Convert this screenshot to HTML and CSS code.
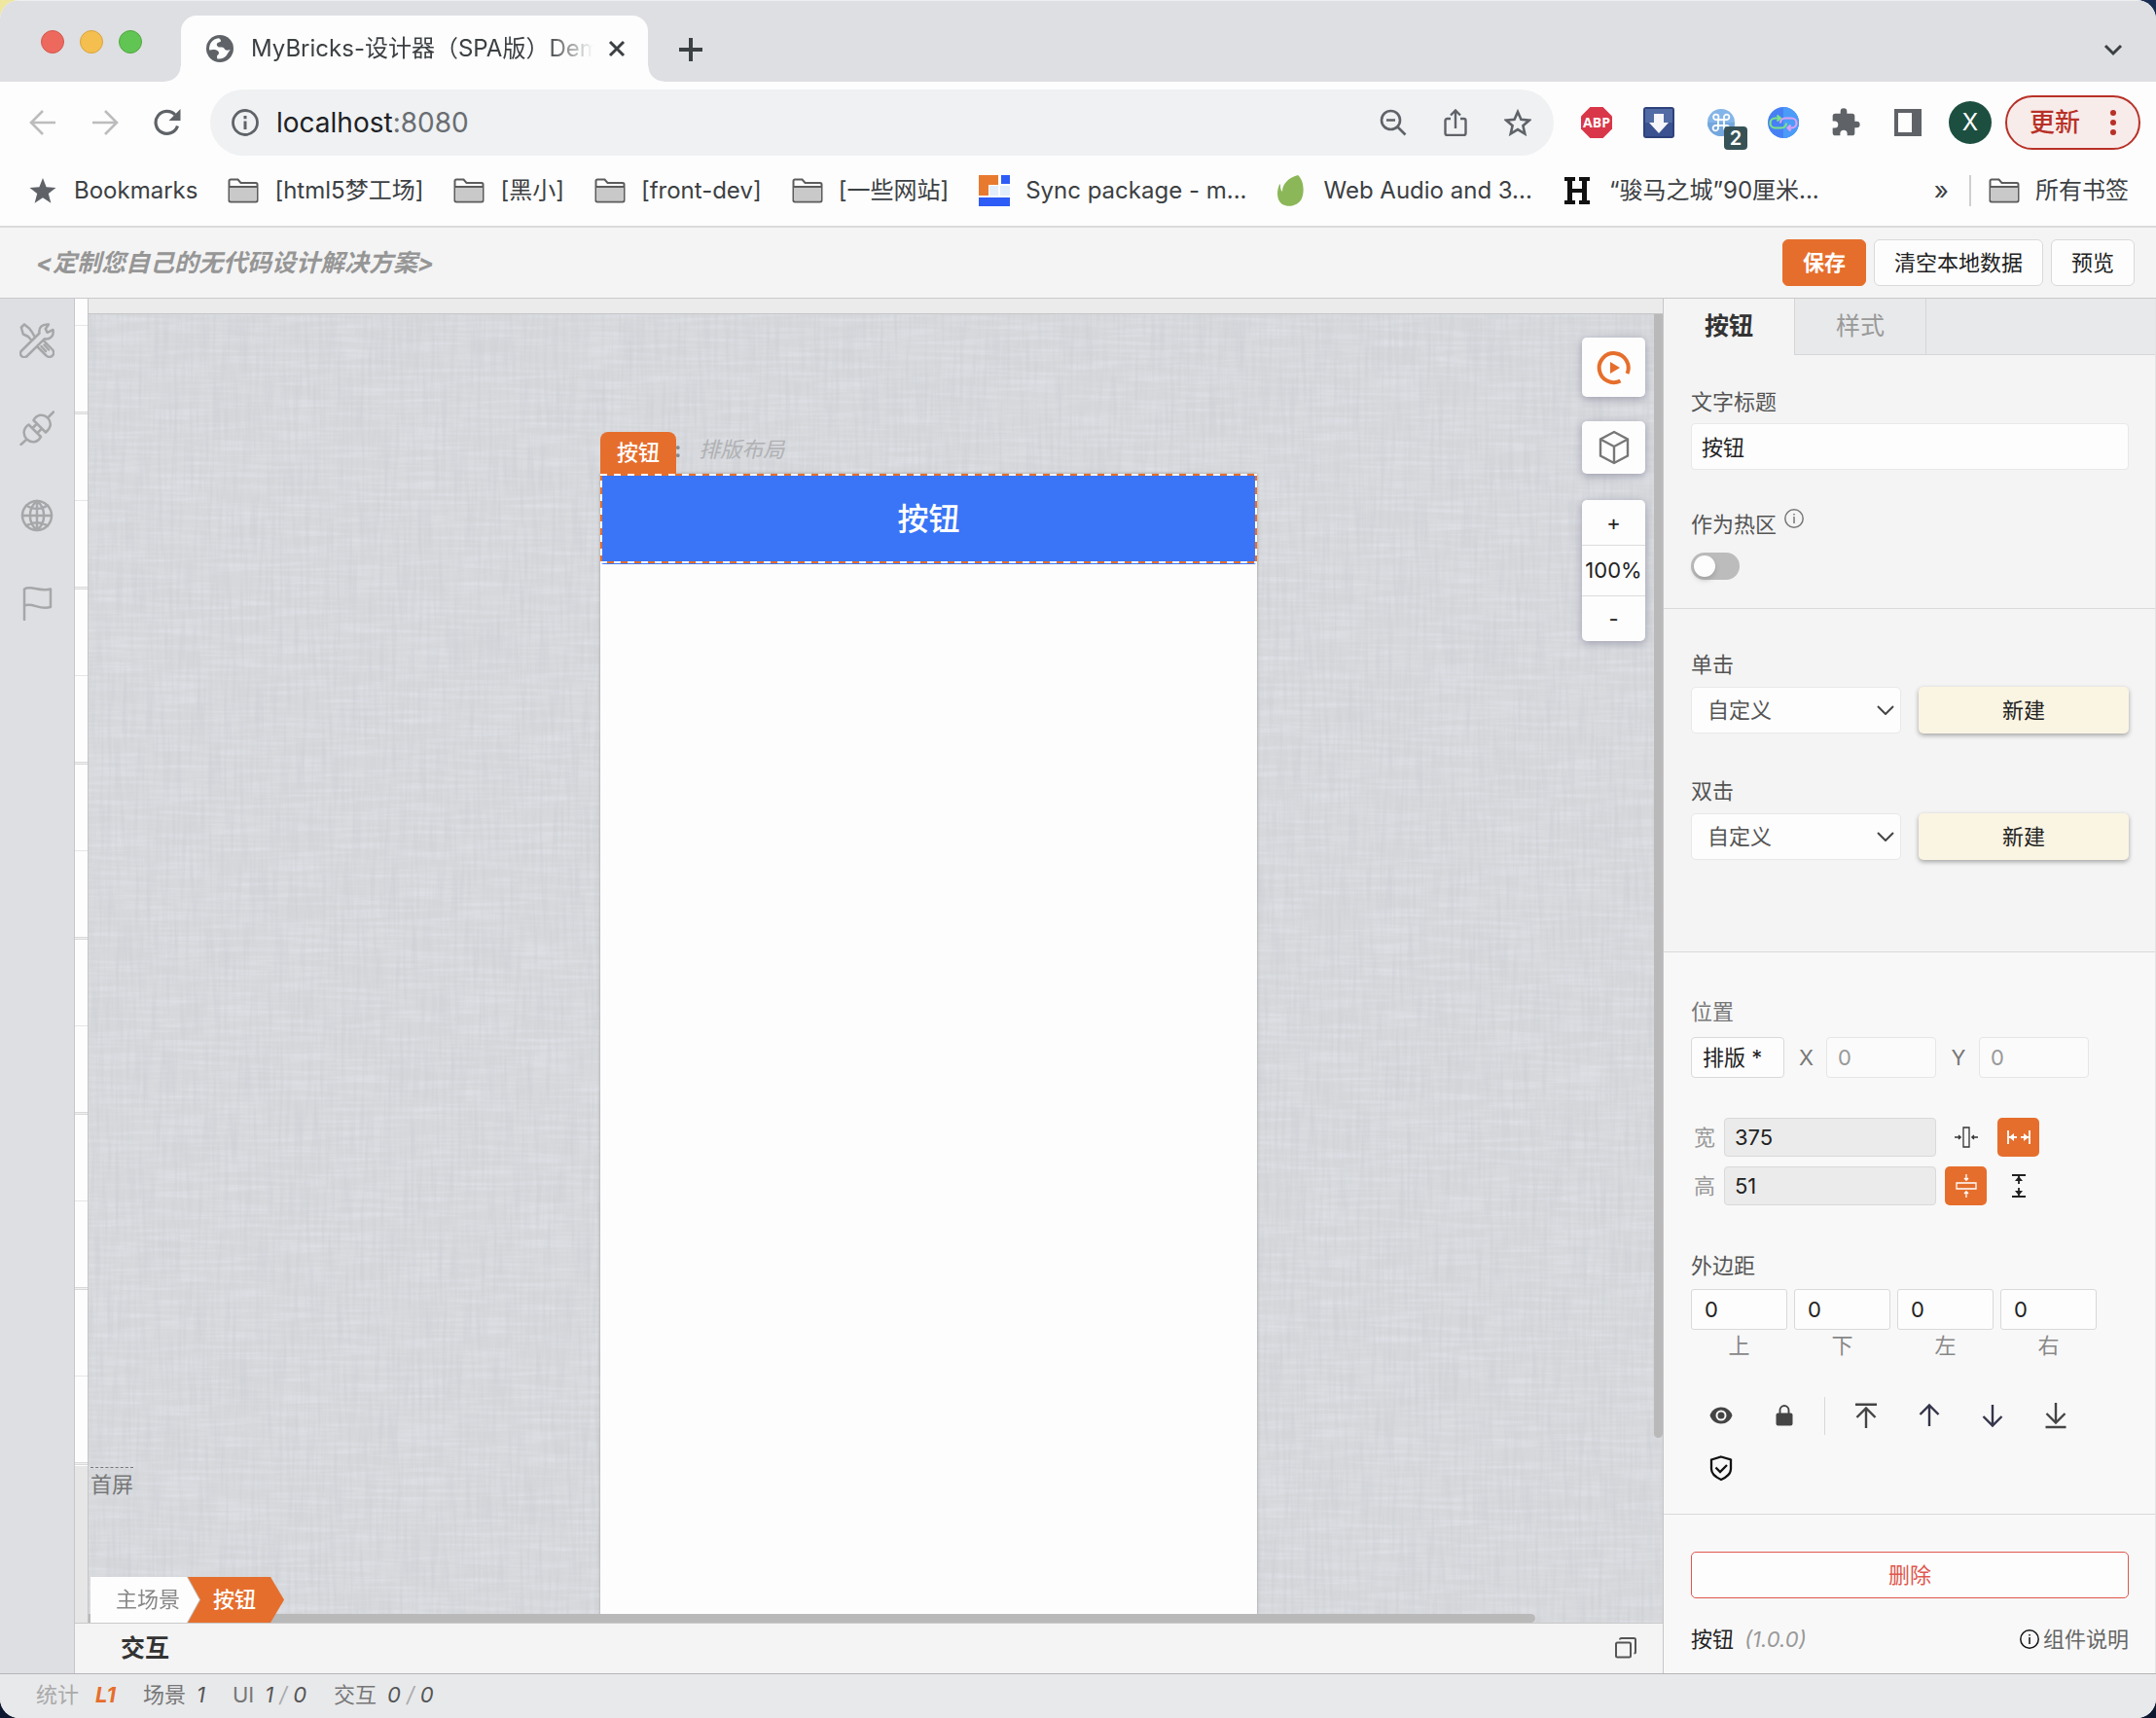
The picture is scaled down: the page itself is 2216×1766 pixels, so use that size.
FILE: index.html
```html
<!DOCTYPE html>
<html lang="zh-CN">
<head>
<meta charset="utf-8">
<title>MyBricks-设计器（SPA版）Demo</title>
<link rel="stylesheet" href="styles.css">
</head>
<body>
<svg class="defs" aria-hidden="true">
  <symbol id="folder" viewBox="0 0 32 26">
    <path d="M1.500 24V3a1.500 1.500 0 0 1 1.500-1.500h7.500L13.500 5H29a1.500 1.500 0 0 1 1.500 1.500V23a1.500 1.500 0 0 1-1.500 1.500H3A1.500 1.500 0 0 1 1.500 23z" fill="#fdfdfd" stroke="#5c5c5c" stroke-width="2"/>
    <path d="M2 9h28v14H2z" fill="#c9c9c9"/><path d="M2 9h28" stroke="#5c5c5c" stroke-width="2"/>
  </symbol>
</svg>
<div class="window">
  <header class="tabstrip">
    <div class="lights"><i class="light red"></i><i class="light yellow"></i><i class="light green"></i></div>
    <div class="tab">
      <svg class="i28" viewBox="0 0 24 24"><circle cx="12" cy="12" r="12" fill="#5f6368"/><path d="M11 2.800C5.500 3.300 2.200 8 2.700 13.200l3.300-.4c2 0 4.200.4 5 2.200.6 1.500-.6 2.400-1.500 3.200v2.600c3 .8 5.800-.3 8-2.300.9-1.500 1.800-3.500 3.700-5.700-2.200 1-4.700 1-5.200-.7-.5-1.400-2.500-1.300-4-1.300-2 0-3.600-2.100-2.200-3.700.9-1 2.700-.4 3.100-1.700.2-.9-.9-2.300-1.900-2.600z" fill="#fdfdfd"/></svg>
      <span class="tab-title">MyBricks-设计器（SPA版）Demo</span>
      <button class="plain" aria-label="关闭"><svg class="i20" viewBox="0 0 20 20"><path d="M3 3l14 14M17 3L3 17" stroke="#3c4043" stroke-width="3"/></svg></button>
    </div>
    <button class="plain newtab" aria-label="新标签页"><svg class="i24" viewBox="0 0 24 24"><path d="M12 0v24M0 12h24" stroke="#3c4043" stroke-width="4"/></svg></button>
    <button class="plain tabmenu" aria-label="搜索标签页"><svg class="i20" viewBox="0 0 20 20"><path d="M2 6l8 8 8-8" fill="none" stroke="#3c4043" stroke-width="3"/></svg></button>
  </header>

  <nav class="toolbar">
    <button class="plain cell" aria-label="后退"><svg class="i28" viewBox="0 0 28 28"><path d="M27 14H3M14 2L2 14l12 12" fill="none" stroke="#bcbcbe" stroke-width="2.600"/></svg></button>
    <button class="plain cell" aria-label="前进"><svg class="i28" viewBox="0 0 28 28"><path d="M1 14h24M14 2l12 12-12 12" fill="none" stroke="#bcbcbe" stroke-width="2.600"/></svg></button>
    <button class="plain cell" aria-label="刷新"><svg class="i28" viewBox="0 0 28 28"><path d="M24.500 17.500A11.500 11.500 0 1 1 22 6" fill="none" stroke="#5f6368" stroke-width="3.200"/><path d="M27.500 0v12h-12z" fill="#5f6368"/></svg></button>
    <div class="omnibox">
      <svg class="i28" viewBox="0 0 28 28"><circle cx="14" cy="14" r="12.500" fill="none" stroke="#5f6368" stroke-width="2.800"/><path d="M14 12.500V21M14 7v3.200" stroke="#5f6368" stroke-width="3"/></svg>
      <span class="url">localhost<span class="port">:8080</span></span>
      <button class="plain cell" aria-label="缩放"><svg class="i28" viewBox="0 0 28 28"><circle cx="11.500" cy="11.500" r="9.500" fill="none" stroke="#5f6368" stroke-width="2.600"/><path d="M18.500 18.500l8 8M7 11.500h9" stroke="#5f6368" stroke-width="2.600"/></svg></button>
      <button class="plain cell" aria-label="分享"><svg class="i28" viewBox="0 0 28 28"><path d="M9 10H5.500A2 2 0 0 0 3.500 12v13a2 2 0 0 0 2 2h17a2 2 0 0 0 2-2V12a2 2 0 0 0-2-2H19M14 20V2M9 6.500l5-5 5 5" fill="none" stroke="#5f6368" stroke-width="2.400"/></svg></button>
      <button class="plain cell" aria-label="收藏"><svg class="i28" viewBox="0 0 28 28"><path d="M14 3l3.400 7.800 8.400.8-6.400 5.600 1.900 8.300-7.300-4.400-7.300 4.400 1.900-8.300-6.400-5.600 8.400-.8z" fill="none" stroke="#5f6368" stroke-width="2.600"/></svg></button>
    </div>
    <button class="plain cell ext first" aria-label="Adblock Plus"><svg class="i32" viewBox="0 0 32 32"><path d="M9.400 0h13.200L32 9.400v13.200L22.600 32H9.400L0 22.600V9.400z" fill="#d93649"/><text x="16" y="21" text-anchor="middle" class="abp">ABP</text></svg></button>
    <button class="plain cell ext" aria-label="下载"><svg class="i32" viewBox="0 0 32 32"><rect width="32" height="32" rx="3" fill="#2d427c"/><rect x="2" y="2" width="28" height="14" fill="#526ba4"/><rect x="2" y="16" width="28" height="14" fill="#3b5290"/><path d="M11 7h10v9h5L16 27 6 16h5z" fill="#f6f6fa"/></svg></button>
    <button class="plain cell ext" aria-label="快捷指令"><svg class="i28" viewBox="0 0 28 28"><circle cx="14" cy="14" r="14" fill="#84b5e8"/><path d="M0 14a14 14 0 0 0 28 0z" fill="#74a7de"/><path d="M11 11h6v6h-6zM11 11H9a2.700 2.700 0 1 1 2.500-3zM17 11V8.500A2.700 2.700 0 1 1 19.500 11zM17 17h2.500a2.700 2.700 0 1 1-2.500 2.500zM11 17v2.500A2.700 2.700 0 1 1 8.500 17z" fill="none" stroke="#fff" stroke-width="1.800"/></svg><span class="badge">2</span></button>
    <button class="plain cell ext" aria-label="链接"><svg class="i32" viewBox="0 0 32 32"><circle cx="16" cy="16" r="16" fill="#4680f4"/><path d="M16 0a16 16 0 0 1 0 32z" fill="#4b9bf8"/><path d="M19 16.500a5 5 0 0 1-5 5H7.500a5 5 0 0 1 0-10H12M9.500 8.500l3.500 3-3.500 3" fill="none" stroke="#7be487" stroke-width="2.200"/><path d="M13 16.500a5 5 0 0 1 5-5h6.500a5 5 0 0 1 0 10H21M23.500 18.500L20.500 21.500l3 3" fill="none" stroke="#dba2f5" stroke-width="2.200"/></svg></button>
    <button class="plain cell ext" aria-label="扩展程序"><svg class="i32" viewBox="0 0 24 24"><path d="M20.500 11H19V7a2 2 0 0 0-2-2h-4V3.500a2.500 2.500 0 0 0-5 0V5H4a2 2 0 0 0-2 2v3.800h1.500a2.700 2.700 0 0 1 0 5.400H2V20c0 1.100.9 2 2 2h3.800v-1.500a2.700 2.700 0 0 1 5.400 0V22H17a2 2 0 0 0 2-2v-4h1.500a2.500 2.500 0 0 0 0-5z" fill="#5f6368"/></svg></button>
    <button class="plain cell ext" aria-label="侧边栏"><svg class="i28" viewBox="0 0 28 28"><path d="M0 0h28v28H0z" fill="#5f6368"/><path d="M4 4h14v20H4z" fill="#fdfdfd"/></svg></button>
    <button class="plain cell ext" aria-label="账号"><span class="avatar">X</span></button>
    <button class="update">更新<svg class="dots" viewBox="0 0 6 26"><circle cx="3" cy="3" r="3"/><circle cx="3" cy="13" r="3"/><circle cx="3" cy="23" r="3"/></svg></button>
  </nav>

  <nav class="bookmarks">
    <a href="#"><svg class="i32" viewBox="0 0 32 32"><path d="M16 3l3.600 9.300 9.900.6-7.700 6.200 2.600 9.700L16 23.300l-8.400 5.500 2.600-9.700L2.500 12.900l9.900-.6z" fill="#5f6368"/></svg>Bookmarks</a>
    <a href="#"><svg class="folder"><use href="#folder"/></svg>[html5梦工场]</a>
    <a href="#"><svg class="folder"><use href="#folder"/></svg>[黑小]</a>
    <a href="#"><svg class="folder"><use href="#folder"/></svg>[front-dev]</a>
    <a href="#"><svg class="folder"><use href="#folder"/></svg>[一些网站]</a>
    <a href="#"><svg class="i32" viewBox="0 0 32 32"><path d="M0 0h20v10H10v11H0z" fill="#e87a30"/><path d="M23 0h9v9h-9zM0 23h32v9H0z" fill="#2e5cf6"/><path d="M11 11h9v10h-9zM22 11h10v10H22z" fill="#e4edfb"/></svg>Sync package - m...</a>
    <a href="#"><svg class="i32" viewBox="0 0 32 32"><path d="M22 0c6 5 7 17 4 24-3 7-13 10-20 6-6-4-6-14-3-20l1-1c0 4 0 6 2 8C6 9 12 3 22 0z" fill="#8bb758"/></svg>Web Audio and 3...</a>
    <a href="#"><svg class="i32" viewBox="0 0 32 32"><path d="M2 2h11v4h-3v8h10V6h-3V2h11v4h-3v20h3v4H17v-4h3v-8H10v8h3v4H2v-4h3V6H2z" fill="#111"/></svg>“骏马之城”90厘米...</a>
    <button class="plain more" aria-label="更多书签">»</button>
    <a href="#" class="all"><svg class="folder"><use href="#folder"/></svg>所有书签</a>
  </nav>

  <header class="appbar">
    <strong class="slogan">&lt;定制您自己的无代码设计解决方案&gt;</strong>
    <button class="btn primary">保存</button>
    <button class="btn">清空本地数据</button>
    <button class="btn">预览</button>
  </header>

  <main class="workspace">
    <aside class="rail">
      <button class="plain" aria-label="工具"><svg class="i36" viewBox="0 0 36 36"><path d="M2.200 28.500L20.500 10.500C19.500 5 23 .8 30 1.500L26.800 6l1.700 3.800L34.500 7c1.200 6-3 10.500-8.800 9.300L7.800 34a3.900 3.900 0 0 1-5.600-5.500zM15.500 14L13 9.500 10 5.500 5 1.500 1.800 4.500l2 7L9 14l3.500 4M18 24l9.500 9.500a4 4 0 0 0 6.500-6L24.500 17.800M22.500 24l4.500 5M25.500 22.500l4.500 5"/></svg></button>
      <button class="plain" aria-label="连接器"><svg class="i36" viewBox="0 0 36 36"><path d="M9.500 14.500l12.500 12.500c-3.500 6-9.500 7-14.500 2.500-4.500-5-3.500-11.500 2-15zM7.500 29.500L1.500 35M14.500 10L27 22.500c5.500-4.500 6.500-10 2-15-5-4.500-11-3.500-14.500 2.500zM29 7.500L35 1.500M13.500 18l3.500-3.500M18.500 23l3.500-3.500"/></svg></button>
      <button class="plain" aria-label="国际化"><svg class="i36" viewBox="0 0 36 36"><circle cx="18" cy="18" r="15"/><path d="M18 3v30M3 18h30M7 7.500c6.500 4.500 15.500 4.500 22 0M7 28.500c6.500-4.500 15.500-4.500 22 0M18 3c-9.500 7.500-9.500 22.500 0 30M18 3c9.500 7.500 9.500 22.500 0 30"/></svg></button>
      <button class="plain" aria-label="标记"><svg class="i36" viewBox="0 0 36 36"><path d="M5 35V3.500c7-4.500 14 3 27 0v18.500c-12 3.500-18-5-27-1.500"/></svg></button>
    </aside>
    <div class="stage">
      <div class="ruler"></div>
      <section class="view">
        <div class="viewtop"></div>
        <div class="canvas">
          <svg class="linen" aria-hidden="true">
            <filter id="weft" x="0" y="0" width="100%" height="100%" color-interpolation-filters="sRGB"><feTurbulence type="fractalNoise" baseFrequency="0.016 0.250" numOctaves="2" seed="3"/><feColorMatrix values="0 0 0 0 .92 0 0 0 0 .93 0 0 0 0 .97 2 0 0 0 -.8"/></filter>
            <filter id="warp" x="0" y="0" width="100%" height="100%" color-interpolation-filters="sRGB"><feTurbulence type="fractalNoise" baseFrequency="0.250 0.016" numOctaves="2" seed="8"/><feColorMatrix values="0 0 0 0 .78 0 0 0 0 .79 0 0 0 0 .82 2 0 0 0 -.8"/></filter>
            <rect width="100%" height="100%" filter="url(#weft)" opacity=".4"/>
            <rect width="100%" height="100%" filter="url(#warp)" opacity=".45"/>
          </svg>
          <div class="device">
            <div class="layout-name"><b>:</b><em>排版布局</em></div>
            <span class="tag">按钮</span>
            <button class="demo">按钮</button>
          </div>
          <span class="fold">首屏</span>
          <div class="tools">
            <button class="tool play" aria-label="调试"><svg class="i36" viewBox="0 0 36 36"><path d="M24.500 31.500A15 15 0 1 1 31.500 24" fill="none" stroke="#e66e2c" stroke-width="4"/><path d="M14 12l10 6-10 6z" fill="#e66e2c"/></svg></button>
            <button class="tool" aria-label="组件库"><svg class="i36" viewBox="0 0 36 36"><path d="M18 2l14 7.500v17L18 34 4 26.500v-17zM4 9.500L18 17l14-7.500M18 17v17" fill="none" stroke="#777" stroke-width="2.400"/></svg></button>
            <div class="zoom"><button>+</button><button>100%</button><button>-</button></div>
          </div>
          <i class="vbar"></i><i class="hbar"></i>
          <nav class="crumbs"><span class="crumb-home"><a href="#">主场景</a></span><a href="#" class="crumb-now">按钮</a></nav>
        </div>
      </section>
      <footer class="logic"><strong>交互</strong><button class="plain" aria-label="展开"><svg class="i24" viewBox="0 0 24 24"><rect x="2" y="6.500" width="15" height="15" rx="1.500"/><path d="M6 3.500A1.500 1.500 0 0 1 7.500 2H20.500A1.500 1.500 0 0 1 22 3.500v12.500A1.500 1.500 0 0 1 20.500 17.500"/></svg></button></footer>
    </div>

    <aside class="panel">
      <div class="tabs"><button class="on">按钮</button><button>样式</button><span></span></div>
      <section class="group g1">
        <label for="ttl">文字标题</label>
        <input id="ttl" class="field white" value="按钮">
        <div class="hot"><label for="hot">作为热区</label><svg class="i20 info" viewBox="0 0 20 20"><circle cx="10" cy="10" r="9.200"/><path d="M10 8v7M10 5v1.600"/></svg></div>
        <input id="hot" type="checkbox" class="switch">
      </section>
      <section class="group g2">
        <label for="click">单击</label>
        <div class="pair"><select id="click"><option>自定义</option></select><button class="new">新建</button></div>
        <label for="dbl">双击</label>
        <div class="pair"><select id="dbl"><option>自定义</option></select><button class="new">新建</button></div>
      </section>
      <section class="group g3">
        <label class="light-label" for="pos">位置</label>
        <div class="position">
          <select id="pos" class="field compact"><option>排版 *</option></select>
          <label for="px">X</label><input id="px" class="field" value="0" disabled>
          <label for="py">Y</label><input id="py" class="field" value="0" disabled>
        </div>
        <div class="size">
          <label for="w">宽</label><input id="w" value="375">
          <button class="plain" aria-label="宽度适应内容"><svg class="i24" viewBox="0 0 24 24"><path d="M9 2h6v20H9zM0 12h6M4 10l2.200 2L4 14M24 12h-6M20 10l-2.200 2 2.200 2" fill="none" stroke="#333" stroke-width="1.300"/></svg></button>
          <button class="plain active" aria-label="宽度填充"><svg class="i24" viewBox="0 0 24 24"><path d="M1 5v14M23 5v14M2 12h8M22 12h-8" stroke="#fff" stroke-width="1.800"/><path d="M2 12l5-4v8zM22 12l-5-4v8z" fill="#fff"/></svg></button>
          <label for="h">高</label><input id="h" value="51">
          <button class="plain active" aria-label="高度适应内容"><svg class="i24" viewBox="0 0 24 24"><path d="M2 9h20v6H2zM12 0v6M10 4l2 2.200L14 4M12 24v-6M10 20l2-2.200 2 2.200" fill="none" stroke="#fff" stroke-width="1.300"/></svg></button>
          <button class="plain" aria-label="高度填充"><svg class="i24" viewBox="0 0 24 24"><path d="M5 1h14M5 23h14M12 2v8M12 22v-8" stroke="#222" stroke-width="1.800"/><path d="M12 2L8 7h8zM12 22l-4-5h8z" fill="#222"/></svg></button>
        </div>
        <span class="caption">外边距</span>
        <div class="margins">
          <label><input class="field" value="0">上</label><label><input class="field" value="0">下</label><label><input class="field" value="0">左</label><label><input class="field" value="0">右</label>
        </div>
        <div class="actions">
          <button class="plain" aria-label="显示"><svg class="i24" viewBox="0 0 24 24"><path d="M12 3.500C6 3.500 2 7.500 .5 12 2 16.500 6 20.500 12 20.500S22 16.500 23.500 12C22 7.500 18 3.500 12 3.500z" fill="#444"/><circle cx="12" cy="12" r="4.500" fill="#444" stroke="#f8f8f8" stroke-width="2"/></svg></button>
          <button class="plain" aria-label="锁定"><svg class="i24" viewBox="0 0 24 24"><rect x="3.500" y="9.500" width="17" height="13" rx="2" fill="#444"/><path d="M7.500 10V6.500a4.500 4.500 0 0 1 9 0V10" fill="none" stroke="#444" stroke-width="1.900"/></svg></button>
          <i></i>
          <button class="plain" aria-label="置顶"><svg class="i28" viewBox="0 0 28 28"><path d="M3 2.800h22M14 27V7M4.500 16L14 6.500l9.500 9.500" fill="none" stroke="#444" stroke-width="2.400"/></svg></button>
          <button class="plain" aria-label="上移"><svg class="i28" viewBox="0 0 28 28"><path d="M14 25V4M4.500 13L14 3.500l9.500 9.500" fill="none" stroke="#34344a" stroke-width="2.400"/></svg></button>
          <button class="plain" aria-label="下移"><svg class="i28" viewBox="0 0 28 28"><path d="M14 3v21M4.500 15l9.500 9.500 9.500-9.500" fill="none" stroke="#34344a" stroke-width="2.400"/></svg></button>
          <button class="plain" aria-label="置底"><svg class="i28" viewBox="0 0 28 28"><path d="M3.500 26h21M14 1v20M4.500 12l9.500 9.500 9.500-9.500" fill="none" stroke="#444" stroke-width="2.400"/></svg></button>
          <button class="plain" aria-label="权限"><svg class="i28" viewBox="0 0 28 28"><path d="M14 2.500l10 3v9.500c0 5-4.500 8.500-10 11-5.500-2.500-10-6-10-11V5.500zM8.500 13.500l4.500 4.500 7-7" fill="none" stroke="#111" stroke-width="2.300"/></svg></button>
        </div>
      </section>
      <section class="group g4">
        <button class="delete">删除</button>
        <div class="about"><span>按钮</span><em>(1.0.0)</em><a href="#"><svg class="i20" viewBox="0 0 20 20"><circle cx="10" cy="10" r="9.200"/><path d="M10 8v7M10 5v1.600"/></svg>组件说明</a></div>
      </section>
    </aside>
  </main>

  <footer class="status">
    <span class="dim">统计</span><em class="level">L1</em>
    <span>场景</span><em class="count">1</em>
    <span>UI</span><em class="count">1<i>/</i>0</em>
    <span>交互</span><em class="count">0<i>/</i>0</em>
  </footer>
</div>
<svg class="watermark" aria-hidden="true">
  <pattern id="mark" x="69" y="67" width="340" height="80" patternUnits="userSpaceOnUse">
    <g id="mk" transform="translate(80 0) rotate(45)"><text y="8">zhaoxing03 - 2023/10/19</text><text y="37">21:13:52</text></g>
    <use href="#mk" y="-80"/><use href="#mk" y="-160"/><use href="#mk" y="-240"/><use href="#mk" y="80"/>
  </pattern>
  <rect width="100%" height="100%" fill="url(#mark)"/>
</svg>
</body>
</html>
```
FILE: styles.css
```css
* { box-sizing: border-box; }
body {
  margin: 0;
  min-height: 100vh;
  display: flex;
  background: linear-gradient(90deg, #efe6a0 0 50%, #1b2c52 50%) 0 0 / 100% 60px no-repeat, #0d1830;
  color: #222;
  font: 22px/22px Inter, "Noto Sans CJK SC", sans-serif;
}
button, input, select { font: inherit; color: inherit; margin: 0; }
input, select { min-width: 0; }
a { color: inherit; text-decoration: none; }
svg { display: block; flex: none; }
.defs { position: absolute; width: 0; height: 0; }
.plain { display: flex; align-items: center; justify-content: center; padding: 0; border: 0; background: none; }
.i20 { width: 20px; height: 20px; }
.i24 { width: 24px; height: 24px; }
.i28 { width: 28px; height: 28px; }
.i32 { width: 32px; height: 32px; }
.i36 { width: 36px; height: 36px; }
.window { flex: 1; min-width: 0; display: flex; flex-direction: column; overflow: hidden; border-radius: 20px; background: #fdfdfd; }

/* browser chrome */
.tabstrip, .toolbar, .bookmarks { font-size: 24px; line-height: 32px; color: #3c4043; }
.tabstrip { display: flex; height: 84px; padding-right: 34px; background: #dedfe3; border-top: 1px solid #eeeff1; }
.lights { display: flex; gap: 16px; padding: 30px 40px 0 42px; }
.light { width: 24px; height: 24px; border-radius: 50%; border: 1px solid #d3584d; background: #ed695e; }
.light.yellow { background: #f4bf4f; border-color: #d8a33d; }
.light.green { background: #61c554; border-color: #51a73e; }
.tab { position: relative; display: flex; align-items: center; width: 480px; margin-top: 15px; padding: 0 22px 0 26px; border-radius: 16px 16px 0 0; background: #fdfdfd; }
.tab::before, .tab::after { content: ""; position: absolute; bottom: 0; left: -16px; width: 16px; height: 16px; background: radial-gradient(circle at 0 0, #dedfe3 15px, #fdfdfd 16px); }
.tab::after { left: 100%; background: radial-gradient(circle at 100% 0, #dedfe3 15px, #fdfdfd 16px); }
.tab-title { flex: 1; margin: 0 14px 0 18px; overflow: hidden; white-space: nowrap; mask-image: linear-gradient(90deg, #000 calc(100% - 48px), transparent); }
.newtab { margin-left: 32px; }
.newtab, .tabmenu { padding-top: 16px; }
.tabmenu { margin-left: auto; }
.toolbar { display: flex; align-items: center; height: 84px; padding: 0 16px 0 12px; }
.cell { position: relative; width: 64px; height: 64px; flex: none; }
.omnibox { flex: 1; display: flex; align-items: center; height: 68px; margin-left: 12px; padding: 0 5px 0 22px; border-radius: 34px; background: #eff1f3; font-size: 28px; }
.url { flex: 1; margin-left: 18px; color: #202124; }
.port { color: #6a6d71; }
.first { margin-left: 12px; }
.abp { font: bold 14px "Open Sans", sans-serif; fill: #fff; }
.badge { position: absolute; left: 35px; top: 36px; width: 24px; height: 24px; border-radius: 4px; background: #375257; color: #fff; font: 600 20px/24px Inter, sans-serif; text-align: center; }
.avatar { width: 44px; height: 44px; border-radius: 50%; background: #1d4f41; color: #fff; line-height: 44px; }
.update { display: flex; align-items: center; gap: 31px; height: 56px; margin-left: 4px; padding: 0 23px; border: 2px solid #b83127; border-radius: 28px; background: #f8eceb; color: #b83127; font-size: 26px; font-weight: 500; }
.dots { width: 6px; height: 26px; fill: #b83127; }
.bookmarks { display: flex; align-items: center; gap: 31px; height: 66px; padding: 0 28px 8px; border-bottom: 2px solid #dadadb; white-space: nowrap; }
.bookmarks a { display: flex; align-items: center; gap: 16px; }
.folder { width: 32px; height: 26px; }
.more { margin-left: auto; }
.bookmarks .more { font-size: 26px; margin-right: -10px; }
.bookmarks .all { border-left: 2px solid #cfcfd1; padding-left: 18px; }

/* application header */
.appbar { display: flex; align-items: center; gap: 8px; height: 73px; padding: 0 22px 0 37px; background: #f4f4f4; border-bottom: 1px solid #c9c9c9; }
.slogan { margin-right: auto; color: #969696; font-size: 25px; line-height: 32px; font-style: italic; }
.btn { height: 48px; padding: 0 20px 1px; border: 1px solid #d9d9d9; border-radius: 6px; background: #fdfdfd; }
.btn.primary { border-color: #e66e2c; background: #e66e2c; color: #fff; font-weight: bold; }

/* work area */
.workspace { flex: 1; display: flex; }
.rail { display: flex; flex-direction: column; gap: 4px; width: 76px; background: #dedfe3; }
.rail button { height: 86px; }
.rail svg { fill: none; stroke: #a6a7a8; stroke-width: 2.500; stroke-linecap: round; stroke-linejoin: round; }
.stage { flex: 1; min-width: 0; display: grid; grid-template: 1fr 52px / 14px 1fr; border-left: 1px solid #c6c6c8; }
.ruler {
  background:
    linear-gradient(#e6e6e6, #e6e6e6) 0 1200px / 100% 500px no-repeat,
    repeating-linear-gradient(#fdfdfd 0 27px, #e6e6e6 27px 28px, #fdfdfd 28px 116px, #d9d9d9 116px 117px, #f0f0f0 117px 118px, #d9d9d9 118px 119px, #fdfdfd 119px 180px);
  border-right: 1px solid #c6c6c8;
}
.view { display: flex; flex-direction: column; min-width: 0; }
.viewtop { height: 16px; background: #ebebeb; border-bottom: 1px solid #c6c6c8; }
.canvas { position: relative; flex: 1; display: flex; justify-content: center; padding: 164px 0 0 109px; background: #d6d8db; overflow: hidden; }
.linen { position: absolute; inset: 0; width: 100%; height: 100%; }
.device { position: relative; width: 675px; background: #fdfdfd; box-shadow: 0 0 3px #9a9a9a; }
.demo { position: relative; display: block; width: 100%; height: 93px; border: 0; border-radius: 4px; background: #3975f6; color: #fff; font-size: 32px; line-height: 90px; font-weight: 500; }
.demo::before {
  content: ""; position: absolute; inset: 0 0 1px;
  background:
    repeating-linear-gradient(90deg, #fff 0 7px, #e66e2c 7px 14px) 0 0 / 100% 2px no-repeat,
    repeating-linear-gradient(90deg, #fff 0 7px, #e66e2c 7px 14px) 0 100% / 100% 2px no-repeat,
    repeating-linear-gradient(#e66e2c 0 7px, #fff 7px 14px) 0 0 / 2px 100% no-repeat,
    repeating-linear-gradient(#e66e2c 0 7px, #fff 7px 14px) 100% 0 / 2px 100% no-repeat;
}
.tag { position: absolute; left: 0; bottom: 100%; padding: 10px 17px 11px; border-radius: 8px 8px 0 0; background: #e66e2c; color: #fff; font-weight: 500; }
.layout-name { position: absolute; left: 76px; bottom: 100%; display: flex; gap: 18px; padding-bottom: 14px; color: #b0b1b4; white-space: nowrap; }
.layout-name b { color: #888; }
.fold { position: absolute; left: 2px; top: 1185px; padding-top: 6px; border-top: 1px dashed #777; color: #777; }
.tools { position: absolute; top: 24px; right: 18px; width: 65px; }
.tool, .zoom { width: 100%; border: 0; border-radius: 5px; background: #fdfdfd; box-shadow: 0 2px 8px #9c9cac; }
.tool { display: flex; align-items: center; justify-content: center; height: 54px; margin-bottom: 27px; padding: 0; }
.tool.play { height: 61px; margin-bottom: 25px; }
.zoom button { display: block; width: 100%; height: 46px; padding: 0; border: 0; background: none; }
.zoom button:nth-child(2) { height: 53px; padding-bottom: 2px; border: solid #dcdcdc; border-width: 1px 0; }
.vbar { position: absolute; right: 0; top: 0; width: 9px; height: 1155px; border-radius: 0 0 5px 5px; background: #b9b9b9; }
.hbar { position: absolute; left: 0; right: 131px; bottom: 0; height: 9px; border-radius: 0 5px 5px 0; background: #b9b9b9; }
.crumbs { position: absolute; left: 2px; bottom: 0; display: flex; }
.crumb-home { position: relative; z-index: 1; filter: drop-shadow(1px 0 0 #c0c0c0); }
.crumbs a { display: block; height: 47px; line-height: 46px; }
.crumb-home a { padding: 0 20px 0 26px; background: #fdfdfd; color: #888; clip-path: polygon(0 0, calc(100% - 13px) 0, 100% 50%, calc(100% - 13px) 100%, 0 100%); }
.crumb-now { margin-left: -13px; padding: 0 29px 0 27px; background: #e66e2c; color: #fff; font-weight: 500; clip-path: polygon(0 0, calc(100% - 14px) 0, 100% 50%, calc(100% - 14px) 100%, 0 100%); }
.logic { grid-column: 1 / -1; display: flex; align-items: center; justify-content: space-between; padding: 0 26px 2px 47px; border-top: 1px solid #c9c9c9; background: #f4f4f4; color: #333; font-size: 25px; }
.logic svg { fill: none; stroke: #555; stroke-width: 2; }

/* property panel */
.panel { display: flex; flex-direction: column; width: 507px; border: solid #c6c6c8; border-width: 0 1px; border-right-color: #e4e4e4; background: #f4f4f4; }
.tabs { display: flex; height: 58px; font-size: 25px; }
.tabs button, .tabs span { padding: 0; border: solid #d6d6d8; border-width: 0 1px 1px 0; background: #e8e9eb; color: #999; }
.tabs button { width: 135px; padding-bottom: 2px; }
.tabs .on { border-bottom: 0; background: none; color: #333; font-weight: bold; }
.tabs span { flex: 1; border-right: 0; }
.group { display: flex; flex-direction: column; padding: 0 27px 0 28px; border-bottom: 1px solid #d9d9d9; }
.group label, .caption { color: #555; }
.field, .size input { height: 42px; padding: 0 11px; border: 1px solid #d9d9d9; border-radius: 4px; background: #fdfdfd; }
.g1 { padding-top: 37px; padding-bottom: 29px; }
.g1 .field { height: 48px; margin: 11px 0 45px; padding: 0 10px 2px; border-color: #e8e8e8; }
.hot { display: flex; gap: 8px; margin-bottom: 18px; }
.info { margin-top: -5px; }
.info, .about svg { fill: none; stroke: #777; stroke-width: 1.500; }
.switch { position: relative; appearance: none; width: 50px; height: 28px; border-radius: 14px; background: #bcbcbc; }
.switch::before { content: ""; position: absolute; left: 3px; top: 3px; width: 22px; height: 22px; border-radius: 50%; background: #fdfdfd; box-shadow: 0 3px 5px #8888; }
.g2 { padding-top: 46px; padding-bottom: 46px; }
.pair { display: grid; grid-template-columns: 1fr 1fr; gap: 18px; margin: 12px 0 48px; }
.pair select { appearance: none; height: 48px; padding: 0 16px; border: 1px solid #e8e8e8; border-radius: 5px; color: #555; background: #fdfdfd url("data:image/svg+xml,%3Csvg xmlns='http://www.w3.org/2000/svg' width='18' height='10'%3E%3Cpath d='M1 1l8 8 8-8' fill='none' stroke='%23444' stroke-width='2'/%3E%3C/svg%3E") right 6px center no-repeat; }
.new { border: 0; border-radius: 5px; background: #faf4e2; box-shadow: 0 2px 5px #0005; }
.g3, .g4 { background: #f8f8f8; }
.g3 { padding-top: 50px; padding-bottom: 20px; }
.group .light-label { color: #777; }
.position { display: grid; grid-template-columns: 96px 43px 113px 44px 113px; align-items: center; margin: 15px 0 41px; }
.position label { padding-left: 2px; text-align: center; color: #777; }
.position .compact { appearance: none; }
.position input { border-color: #e6e6e6; color: #999; background: #fbfbfb; }
.size { display: grid; grid-template-columns: 34px 218px 52px 54px; grid-auto-rows: 40px; row-gap: 10px; align-items: center; margin-bottom: 51px; }
.size label { padding-left: 3px; color: #999; }
.size input { height: 40px; padding: 0 10px; background: #ebebeb; }
.size button { width: 43px; height: 40px; margin-left: 9px; }
.size button:nth-of-type(even) { margin-left: 11px; }
.size .active { border-radius: 5px; background: #e66e2c; }
.margins { display: grid; grid-template-columns: repeat(4, 99px); gap: 7px; margin: 13px 0 34px; }
.margins label { display: flex; flex-direction: column; gap: 5px; text-align: center; color: #888; }
.margins input { padding: 0 13px; border-radius: 3px; color: #222; }
.actions { display: flex; flex-wrap: wrap; align-items: center; margin-left: -2px; }
.actions button { width: 65px; height: 54px; }
.actions i { width: 1px; height: 39px; margin: 0 9px; background: #d9d9d9; }
.g4 { flex: 1; padding-top: 38px; border: 0; }
.delete { height: 48px; padding: 0 0 1px; border: 1px solid #e0574d; border-radius: 5px; background: #fdfdfd; color: #e0574d; }
.about { display: flex; gap: 11px; margin-top: 31px; }
.about em { color: #999; }
.about a { display: flex; align-items: center; gap: 4px; margin-left: auto; color: #666; }
.about svg { stroke: #111; }

.status { display: flex; align-items: center; height: 46px; padding: 0 37px 3px; border-top: 1px solid #b5b5b9; background: #e8e9eb; color: #777; }
.status .dim { color: #aaa; }
.level { margin: 0 28px 0 17px; color: #e66e2c; font-weight: bold; }
.count { display: flex; gap: 6px; margin: 0 28px 0 11px; color: #555; }
.count i { color: #aaa; }
.watermark { position: fixed; inset: 0; width: 100%; height: 100%; pointer-events: none; fill: #000; fill-opacity: .018; font: 23px Inter, sans-serif; }
```
